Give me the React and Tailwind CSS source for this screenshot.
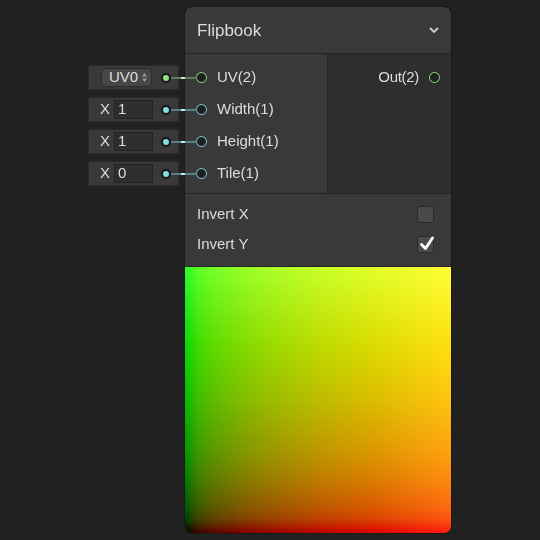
import React from "react";

const font = { fontFamily: '"Liberation Sans", Arial, sans-serif' };

const inputs = [
  { label: "UV(2)", kind: "uv", color: "green" },
  { label: "Width(1)", kind: "x", value: "1", color: "cyan" },
  { label: "Height(1)", kind: "x", value: "1", color: "cyan" },
  { label: "Tile(1)", kind: "x", value: "0", color: "cyan" },
];

function Dot({ color }) {
  return (
    <div className="w-[10px] h-[10px] rounded-full bg-[#161616] flex items-center justify-center">
      <div
        className={
          color === "green"
            ? "w-[6px] h-[6px] rounded-full bg-[#8de37c]"
            : "w-[6px] h-[6px] rounded-full bg-[#7fdde6]"
        }
      />
    </div>
  );
}

function Port({ color }) {
  return (
    <div
      className={
        color === "green"
          ? "w-[11px] h-[11px] rounded-full border-[1.5px] border-[#8de37c] bg-[#202020]"
          : "w-[11px] h-[11px] rounded-full border-[1.5px] border-[#7fd7e2] bg-[#202020]"
      }
    />
  );
}

function InputBox({ item }) {
  return (
    <div className="h-[25px] w-[91px] bg-[#393939] border border-[#2a2a2a] flex items-center relative">
      {item.kind === "uv" ? (
        <div className="ml-[12px] h-[19px] w-[51px] rounded-[4px] bg-[#474747] border border-[#2b2b2b] flex items-center pl-[7px] gap-[3px] text-[15px] text-[#dedede]">
          <span>UV0</span>
          <svg width="7" height="11" viewBox="0 0 7 11">
            <path d="M3.5 1 L6 4.5 H1 Z" fill="#9a9a9a" />
            <path d="M3.5 10 L6 6.5 H1 Z" fill="#9a9a9a" />
          </svg>
        </div>
      ) : (
        <>
          <span className="ml-[11px] text-[15px] text-[#dedede] w-[14px]">X</span>
          <div className="h-[19px] w-[39px] bg-[#2e2e2e] border border-[#222] flex items-center pl-[3px] text-[15px] text-[#dedede]">
            {item.value}
          </div>
        </>
      )}
      <div className="absolute left-[72px] top-[6.5px] z-10">
        <Dot color={item.color} />
      </div>
    </div>
  );
}

function Wire({ color }) {
  const base = color === "green" ? "bg-[#5d7d63]" : "bg-[#5b8086]";
  const hi = color === "green" ? "bg-[#c6f5b8]" : "bg-[#c0f0f5]";
  return (
    <div className="flex items-center w-[26px] h-[2px]">
      <div className={"w-[10px] h-[2px] " + base} />
      <div className={"w-[4px] h-[2px] " + hi} />
      <div className={"w-[12px] h-[2px] " + base} />
    </div>
  );
}

function Checkbox({ checked }) {
  return (
    <div className="w-[17px] h-[17px] rounded-[3px] bg-[#4a4a4a] border border-[#2a2a2a] flex items-center justify-center relative">
      {checked && (
        <svg width="18" height="18" viewBox="0 0 18 18" className="absolute -top-[3px] left-[0px]">
          <path
            d="M3.5 10.5 L7.5 14.5 L14.5 4"
            stroke="#fff"
            strokeWidth="2.8"
            fill="none"
            strokeLinecap="round"
            strokeLinejoin="round"
          />
        </svg>
      )}
    </div>
  );
}

export default function App() {
  return (
    <div className="w-[540px] h-[540px] bg-[#212121] relative overflow-hidden" style={font}>
      {/* node */}
      <div className="absolute left-[185px] top-[7px] w-[266px] h-[526px] rounded-[7px] bg-[#393939] flex flex-col overflow-hidden shadow-[0_0_0_1px_#1a1a1a]">
        <div className="h-[47px] flex items-center justify-between pl-[12px] pr-[11px] border-b border-[#242424]">
          <span className="text-[17px] text-[#dcdcdc] mt-[1px]">Flipbook</span>
          <svg width="12" height="8" viewBox="0 0 12 8">
            <path d="M2 2 L6 6 L10 2" stroke="#d0d0d0" strokeWidth="1.8" fill="none" />
          </svg>
        </div>

        <div className="h-[140px] flex border-b border-[#242424]">
          <div className="w-[143px] bg-[#393939] border-r border-[#262626] flex flex-col pt-[7px]">
            {inputs.map((it) => (
              <div key={it.label} className="h-[32px] flex items-center pl-[11px] gap-[10px]">
                <Port color={it.color} />
                <span className="text-[15px] text-[#dcdcdc] mt-[1px]">{it.label}</span>
              </div>
            ))}
          </div>
          <div className="flex-1 bg-[#2e2e2e] flex flex-col pt-[7px]">
            <div className="h-[32px] flex items-center justify-end pr-[11px] gap-[10px]">
              <span className="text-[15px] text-[#dcdcdc] tracking-[-0.3px] mt-[1px]">Out(2)</span>
              <Port color="green" />
            </div>
          </div>
        </div>

        <div className="h-[72px] flex flex-col pt-[5px]">
          <div className="h-[30px] flex items-center justify-between pl-[12px] pr-[17px]">
            <span className="text-[15px] text-[#dcdcdc]">Invert X</span>
            <Checkbox />
          </div>
          <div className="h-[30px] flex items-center justify-between pl-[12px] pr-[17px]">
            <span className="text-[15px] text-[#dcdcdc]">Invert Y</span>
            <Checkbox checked />
          </div>
        </div>

        <div className="flex-1 relative border-t border-[#242424]">
          <div className="absolute inset-0 bg-[linear-gradient(to_right,#000_0%,#400000_5%,#5a0000_10%,#7c0000_20%,#960000_30%,#bc0000_50%,#da0000_70%,#ff1a10_100%)]" />
          <div className="absolute inset-0 mix-blend-screen bg-[linear-gradient(to_top,#000_0%,#004000_5%,#005a00_10%,#007c00_20%,#009600_30%,#00bc00_50%,#00da00_70%,#28ff28_100%)]" />
        </div>
      </div>

      {/* input fields with wires, drawn over the node edge */}
      <div className="absolute left-[88px] top-[65px] flex flex-col gap-[7px]">
        {inputs.map((it) => (
          <div key={it.label} className="flex items-center">
            <InputBox item={it} />
            <div className="-ml-[8px] relative">
              <Wire color={it.color} />
            </div>
          </div>
        ))}
      </div>
    </div>
  );
}
